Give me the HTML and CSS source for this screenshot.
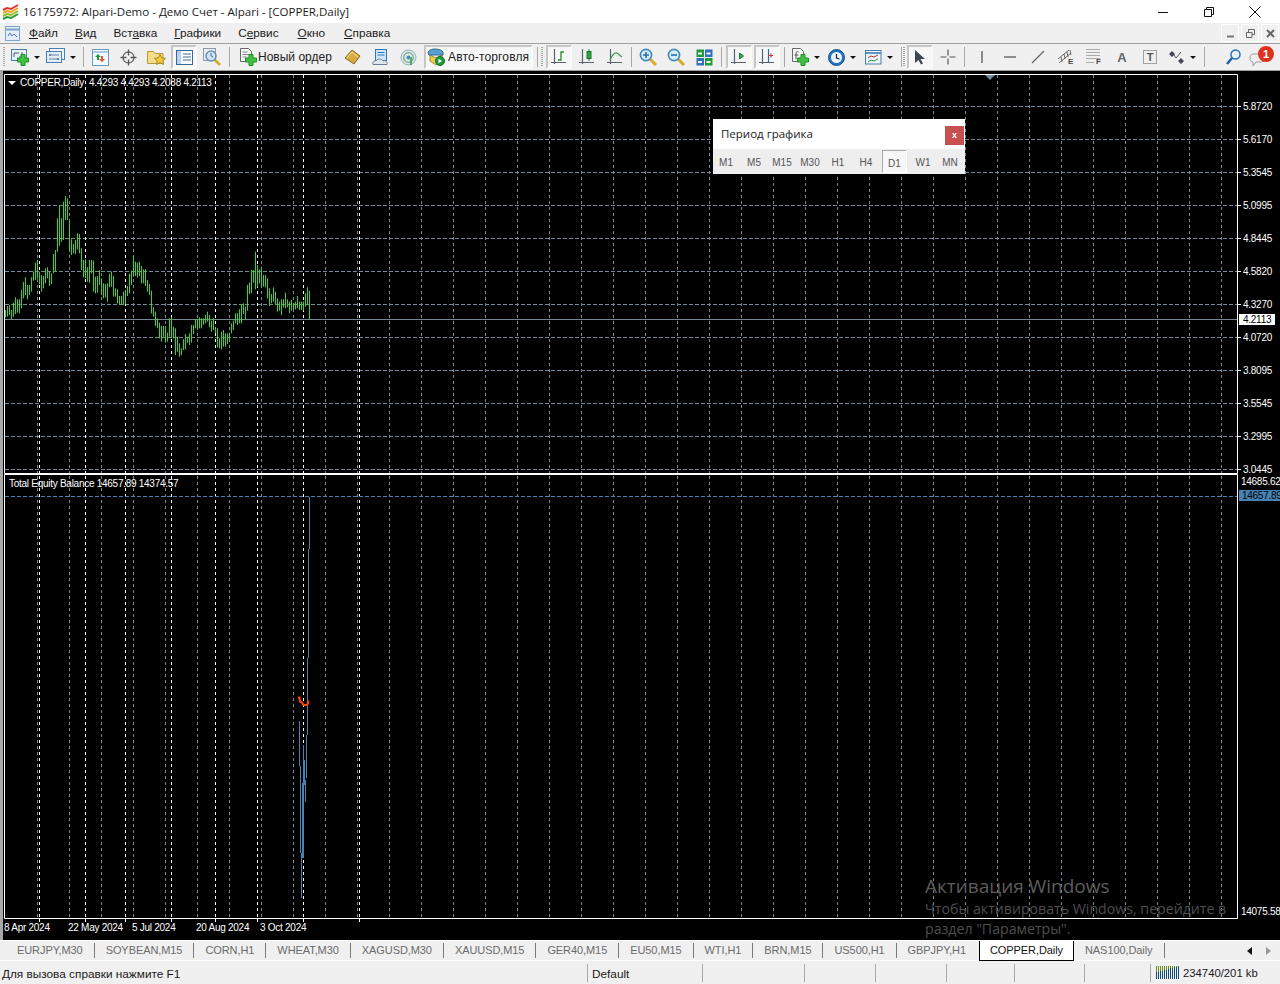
FILE: index.html
```html
<!DOCTYPE html>
<html lang="ru">
<head>
<meta charset="utf-8">
<title>16175972: Alpari-Demo - Демо Счет - Alpari - [COPPER,Daily]</title>
<link rel="stylesheet" href="styles.css">
</head>
<body>
<svg class="defs" width="0" height="0" aria-hidden="true">
  <defs>
    <symbol id="plus" viewBox="0 0 12 12"><path d="M4 .5h4v3.500h3.500v4H8v3.500H4V8H.5V4H4z" fill="#3fc23f" stroke="#1b8f2a"/></symbol>
    <symbol id="axes" viewBox="0 0 18 18"><path d="M4.500 1v15M1 14.500h15" fill="none" stroke="#5a646e" stroke-width="1.200"/></symbol>
    <symbol id="lens" viewBox="0 0 18 18"><path d="M11 11l6 6" stroke="#d9a928" stroke-width="3"/><circle cx="7" cy="7" r="5.600" fill="#d6ecfb" stroke="#3f88bf" stroke-width="1.600"/></symbol>
  </defs>
</svg>

<header class="titlebar">
  <svg class="app-icon" width="17" height="16" viewBox="0 0 17 16"><path d="M1 6l4-2 4 1 7-4" fill="none" stroke="#e0342a" stroke-width="2"/><path d="M1 9l4-2 4 1 7-4" fill="none" stroke="#f0a020" stroke-width="2"/><path d="M1 12l4-2 4 1 7-4" fill="none" stroke="#8ac020" stroke-width="2"/><path d="M1 15l4-2 4 1 7-4" fill="none" stroke="#2a9a30" stroke-width="2"/></svg>
  <span class="title-text">16175972: Alpari-Demo - Демо Счет - Alpari - [COPPER,Daily]</span>
  <div class="win-controls">
    <span class="win-btn"><svg width="12" height="12" viewBox="0 0 12 12"><path d="M1 6.500h10" stroke="#111"/></svg></span>
    <span class="win-btn"><svg width="12" height="12" viewBox="0 0 12 12"><path d="M1.500 3.500h7v7h-7zM3.500 3.500v-2h7v7h-2" fill="none" stroke="#111"/></svg></span>
    <span class="win-btn"><svg width="12" height="12" viewBox="0 0 12 12"><path d="M.5.5l11 11M11.500.5l-11 11" stroke="#111"/></svg></span>
  </div>
</header>

<nav class="menubar">
  <svg class="menu-icon" width="15" height="15" viewBox="0 0 15 15"><rect x=".5" y=".5" width="14" height="14" fill="#e3eef8" stroke="#7aa4cc"/><path d="M.5 3.500h14" stroke="#7aa4cc" stroke-width="2"/><path d="M3 10l2-3 2 3 2-2 3 3" fill="none" stroke="#5577aa"/></svg>
  <div class="menu-items">
    <span><u>Ф</u>айл</span>
    <span><u>В</u>ид</span>
    <span>Вст<u>а</u>вка</span>
    <span><u>Г</u>рафики</span>
    <span>С<u>е</u>рвис</span>
    <span><u>О</u>кно</span>
    <span><u>С</u>правка</span>
  </div>
  <div class="mdi-controls">
    <span class="mdi-btn"><svg width="9" height="9" viewBox="0 0 9 9"><path d="M1 7.500h7" stroke="#777" stroke-width="2"/></svg></span>
    <span class="mdi-btn"><svg width="9" height="9" viewBox="0 0 9 9"><path d="M.5 3.500h5.500v5H.5zM2.500 3V.5h6v5H6" fill="none" stroke="#666"/></svg></span>
    <span class="mdi-btn"><svg width="9" height="9" viewBox="0 0 9 9"><path d="M1 1l7 7M8 1L1 8" stroke="#666" stroke-width="2"/></svg></span>
  </div>
</nav>

<div class="toolbar">
  <i class="grip"></i>
  <span class="tb drop">
    <svg width="18" height="18" viewBox="0 0 18 18"><rect x=".5" y="1.500" width="15" height="11" fill="#e8f2fa" stroke="#4c7fb0"/><path d="M3 5h5M3 5v4M11 4v5M8 9h5" stroke="#556" fill="none"/><use href="#plus" x="6" y="6" width="12" height="12"/></svg><b class="caret"></b>
  </span>
  <span class="tb drop">
    <svg width="19" height="18" viewBox="0 0 19 18"><rect x="3.500" y=".5" width="15" height="11" fill="#eef5fb" stroke="#4c7fb0"/><rect x=".5" y="3.500" width="15" height="11" fill="#e0eefa" stroke="#4c7fb0"/><path d="M3 7h10M3 11h10" stroke="#6a86a8"/><path d="M4 6v2M12 10v2" stroke="#446"/></svg><b class="caret"></b>
  </span>
  <i class="sep"></i>
  <span class="tb"><svg width="17" height="17" viewBox="0 0 17 17"><rect x=".5" y=".5" width="16" height="16" fill="#f4f9fd" stroke="#6a9bc8"/><path d="M.5 3h16" stroke="#6a9bc8"/><path d="M6 5l3 3H7v3H5V8H3z" fill="#1f9a3a"/><path d="M10 13l-3-3h2V7h2v3h2z" fill="#e2532a"/></svg></span>
  <span class="tb"><svg width="17" height="17" viewBox="0 0 17 17"><circle cx="8.500" cy="8.500" r="5.500" fill="none" stroke="#666" stroke-width="1.300"/><path d="M8.500 .5v6M8.500 10.500v6M.5 8.500h6M10.500 8.500h6" stroke="#555" stroke-width="1.300"/></svg></span>
  <span class="tb"><svg width="19" height="17" viewBox="0 0 19 17"><path d="M.5 2.500h6l1.500 2h8v10H.5z" fill="#f6dd8a" stroke="#b8963a"/><path d="M13 5.500l1.700 3.300 3.800.5-2.700 2.600.7 3.600-3.500-1.700-3.500 1.700.7-3.600-2.700-2.600 3.800-.5z" fill="#f2c83a" stroke="#a8862a"/></svg></span>
  <span class="tb active"><svg width="17" height="15" viewBox="0 0 17 15"><rect x=".5" y=".5" width="16" height="14" fill="#fff" stroke="#33689c"/><rect x="1" y="1" width="4" height="13" fill="#b7d3ec"/><path d="M7 4h8M7 7h8M7 10h8" stroke="#3a6a9c"/></svg></span>
  <span class="tb"><svg width="18" height="18" viewBox="0 0 18 18"><rect x=".5" y=".5" width="12" height="12" fill="#e9eff5" stroke="#8a9bb0"/><path d="M12 12l5 5" stroke="#d9a928" stroke-width="2.500"/><circle cx="8" cy="8" r="5" fill="#cfe3f4" stroke="#6d8cab" stroke-width="1.500"/><path d="M8 5v3l2 1" stroke="#4a6a8a" fill="none"/></svg></span>
  <i class="sep sep-wide"></i>
  <span class="tb-text">
    <svg width="18" height="18" viewBox="0 0 18 18"><path d="M1.500.5h8l3 3v10h-11z" fill="#f6f6f6" stroke="#666"/><path d="M3.500 4h5M3.500 6.500h7M3.500 9h4" stroke="#888"/><use href="#plus" x="6" y="6" width="12" height="12"/></svg>
    <span>Новый ордер</span>
  </span>
  <span class="tb"><svg width="17" height="16" viewBox="0 0 17 16"><path d="M1 9l7-8 8 6-6 8z" fill="#d9aa3e" stroke="#8c6a20"/><path d="M3 9l5-6 6 5" fill="none" stroke="#f7e4a4"/></svg></span>
  <span class="tb"><svg width="17" height="17" viewBox="0 0 17 17"><rect x="3.500" y=".5" width="11" height="11" fill="#cfe4f6" stroke="#2f78bd"/><path d="M5.500 3.500h7M5.500 6h7" stroke="#2f78bd"/><path d="M1 15.500c-1-3 2-4.500 3-3.500 1-2.500 6-2.500 7 0 2-1 5 .5 4 3.500z" fill="#dfe7ee" stroke="#6b7f94"/></svg></span>
  <span class="tb"><svg width="17" height="17" viewBox="0 0 17 17"><circle cx="8.500" cy="8.500" r="7.500" fill="#dfe9e6" stroke="#8ab0bc"/><circle cx="8.500" cy="8.500" r="4.800" fill="none" stroke="#7aa88a" stroke-width="1.300"/><circle cx="8.500" cy="8.500" r="2" fill="#3b8fc0"/><path d="M11 8v8" stroke="#2e9a3c" stroke-width="1.500"/></svg></span>
  <span class="tb-auto">
    <svg width="18" height="18" viewBox="0 0 18 18"><path d="M3 7l6 3 6-3v6l-6 4-6-4z" fill="#f0cc50" stroke="#a88a28"/><path d="M1 5c0-3 4-4 7-4s7 1 8 3v3H2z" fill="#5b9fd0" stroke="#31688f"/><circle cx="13" cy="13" r="4.500" fill="#1e9a3c" stroke="#127028"/><path d="M11.500 10.800v4.400l3.500-2.200z" fill="#fff"/></svg>
    <span>Авто-торговля</span>
  </span>
  <i class="sep sep-a"></i>
  <i class="grip grip-a"></i>
  <span class="tb active"><svg width="18" height="18" viewBox="0 0 18 18"><use href="#axes" width="18" height="18"/><path d="M8 12h3V4h3" fill="none" stroke="#1f8f30" stroke-width="1.300"/></svg></span>
  <span class="tb"><svg width="18" height="18" viewBox="0 0 18 18"><use href="#axes" width="18" height="18"/><path d="M11 1v12" stroke="#1f8f30"/><rect x="9" y="3.500" width="4" height="7" fill="#2ea83c" stroke="#157025"/></svg></span>
  <span class="tb"><svg width="18" height="18" viewBox="0 0 18 18"><use href="#axes" width="18" height="18"/><path d="M4 12c2-5 5-8 7-7s3 3 5 4" fill="none" stroke="#3a9a48" stroke-width="1.200"/></svg></span>
  <i class="sep sep-b"></i>
  <span class="tb"><svg width="18" height="18" viewBox="0 0 18 18"><use href="#lens" width="18" height="18"/><path d="M4 7h6M7 4v6" stroke="#2a70a8" stroke-width="1.600"/></svg></span>
  <span class="tb"><svg width="18" height="18" viewBox="0 0 18 18"><use href="#lens" width="18" height="18"/><path d="M4 7h6" stroke="#2a70a8" stroke-width="1.600"/></svg></span>
  <span class="tb"><svg width="17" height="17" viewBox="0 0 17 17"><rect x=".5" y=".5" width="7.500" height="7.500" fill="#1f9a3c"/><rect x="9" y=".5" width="7.500" height="7.500" fill="#2f6fc0"/><rect x=".5" y="9" width="7.500" height="7.500" fill="#2f6fc0"/><rect x="9" y="9" width="7.500" height="7.500" fill="#1f9a3c"/><path d="M2 4.500h4M10.500 4.500h4M2 13h4M10.500 13h4" stroke="#fff" stroke-width="2"/></svg></span>
  <i class="sep sep-c"></i>
  <span class="tb active"><svg width="18" height="18" viewBox="0 0 18 18"><use href="#axes" width="18" height="18"/><path d="M9.500 5v6l4-3z" fill="#2fb04a" stroke="#15803a"/></svg></span>
  <span class="tb active"><svg width="18" height="18" viewBox="0 0 18 18"><use href="#axes" width="18" height="18"/><path d="M10.500 1v13" stroke="#2a6aa8" stroke-width="1.200"/><path d="M10 7.500h5M13 5.500v4" stroke="#d23a2a" stroke-width="1.200"/></svg></span>
  <i class="sep sep-d"></i>
  <span class="tb drop"><svg width="18" height="18" viewBox="0 0 18 18"><path d="M1.500.5h8l3 3v10h-11z" fill="#f6f6f6" stroke="#666"/><path d="M7.500 4c-2-1-2.500 0-2.500 2v5M3.500 7h4" fill="none" stroke="#555"/><use href="#plus" x="6" y="6" width="12" height="12"/></svg><b class="caret"></b></span>
  <span class="tb drop gap-s"><svg width="17" height="17" viewBox="0 0 17 17"><circle cx="8.500" cy="8.500" r="8" fill="#1f74c4" stroke="#15558f"/><circle cx="8.500" cy="8.500" r="5.500" fill="#eef6fc"/><path d="M8.500 5v4l3 1" fill="none" stroke="#123" stroke-width="1.200"/></svg><b class="caret"></b></span>
  <span class="tb drop gap-s"><svg width="17" height="15" viewBox="0 0 17 15"><rect x=".5" y=".5" width="15.500" height="13.500" fill="#eaf4fb" stroke="#4c7fb0"/><path d="M1 3h15" stroke="#5f94c4" stroke-width="2"/><path d="M3 8l3-2 3 1 4-2" fill="none" stroke="#b0321e"/><path d="M3 12l3-2 3 1 4-2" fill="none" stroke="#2a9a3c"/></svg><b class="caret"></b></span>
  <i class="sep sep-e"></i>
  <i class="grip grip-b"></i>
  <span class="tb active"><svg width="12" height="16" viewBox="0 0 12 16"><path d="M1 1v13l3.500-3 2.500 4.500 2-1-2.500-4.500h4.500z" fill="#3c4650"/></svg></span>
  <span class="tb"><svg width="16" height="16" viewBox="0 0 16 16"><path d="M8 .5v6M8 9.500v6M.5 8h6M9.500 8h6" stroke="#555" stroke-width="1.200"/></svg></span>
  <i class="sep sep-f"></i>
  <span class="tb"><svg width="4" height="14" viewBox="0 0 4 14"><path d="M2 1v12" stroke="#555" stroke-width="1.300"/></svg></span>
  <span class="tb"><svg width="14" height="4" viewBox="0 0 14 4"><path d="M1 2h12" stroke="#555" stroke-width="1.300"/></svg></span>
  <span class="tb"><svg width="14" height="14" viewBox="0 0 14 14"><path d="M1 13L13 1" stroke="#666" stroke-width="1.200"/></svg></span>
  <span class="tb"><svg width="18" height="18" viewBox="0 0 18 18"><path d="M1 11L12 2M2 15L14 5M5 14l-1-5M8 11L7 6M11 9l-1-5M14 7l-1-5" stroke="#666" fill="none"/><text class="tool-letter" x="11" y="16">E</text></svg></span>
  <span class="tb"><svg width="16" height="18" viewBox="0 0 16 18"><path d="M.5 1.500h13M.5 4.500h13M.5 7.500h13M.5 10.500h13M.5 14.500h8" stroke="#666" stroke-dasharray="1 1"/><text class="tool-letter" x="10" y="16">F</text></svg></span>
  <span class="tb tb-a">A</span>
  <span class="tb"><svg width="14" height="14" viewBox="0 0 14 14"><rect x=".5" y=".5" width="13" height="13" fill="none" stroke="#555" stroke-dasharray="1 1"/><text class="tool-t" x="7" y="11">T</text></svg></span>
  <span class="tb drop gap-s"><svg width="16" height="15" viewBox="0 0 16 15"><path d="M3 1l3 3-3 3-3-3zM12 8l3 3-3 3-3-3z" fill="#445"/><path d="M7 4l2 3 5-6" fill="none" stroke="#556" transform="translate(-2 1)"/></svg><b class="caret"></b></span>
  <i class="sep sep-g"></i>
  <span class="tb"><svg width="15" height="16" viewBox="0 0 15 16"><circle cx="9.500" cy="5.500" r="4.500" fill="#eaf4fc" stroke="#2a6fc0" stroke-width="1.500"/><path d="M6 9l-5 6" stroke="#1f5fb0" stroke-width="2.500"/></svg></span>
  <span class="tb-alert">
    <svg width="17" height="14" viewBox="0 0 17 14"><path d="M4 1h8c3 0 4 2 4 4s-1 4-4 4H7l-3 4V9C2 9 1 7 1 5s1-4 3-4z" fill="#f0f0f0" stroke="#9a9a9a"/></svg>
    <span class="badge">1</span>
  </span>
</div>

<main class="chart">
  <svg class="plot" width="1277" height="869" viewBox="3 71 1277 869">
    <g class="grid">
      <path class="grid-slate-v" d="M37.500 75V473M69.500 75V473M101.500 75V473M133.500 75V473M165.500 75V473M197.500 75V473M229.500 75V473M261.500 75V473M293.500 75V473M325.500 75V473M357.500 75V473M389.500 75V473M421.500 75V473M453.500 75V473M485.500 75V473M517.500 75V473M549.500 75V473M581.500 75V473M613.500 75V473M645.500 75V473M677.500 75V473M709.500 75V473M741.500 75V473M773.500 75V473M805.500 75V473M837.500 75V473M869.500 75V473M901.500 75V473M933.500 75V473M965.500 75V473M997.500 75V473M1029.500 75V473M1061.500 75V473M1093.500 75V473M1125.500 75V473M1157.500 75V473M1189.500 75V473M1221.500 75V473"/>
      <path class="grid-slate-v" d="M37.500 476V918M69.500 476V918M101.500 476V918M133.500 476V918M165.500 476V918M197.500 476V918M229.500 476V918M261.500 476V918M293.500 476V918M325.500 476V918M357.500 476V918M389.500 476V918M421.500 476V918M453.500 476V918M485.500 476V918M517.500 476V918M549.500 476V918M581.500 476V918M613.500 476V918M645.500 476V918M677.500 476V918M709.500 476V918M741.500 476V918M773.500 476V918M805.500 476V918M837.500 476V918M869.500 476V918M901.500 476V918M933.500 476V918M965.500 476V918M997.500 476V918M1029.500 476V918M1061.500 476V918M1093.500 476V918M1125.500 476V918M1157.500 476V918M1189.500 476V918M1221.500 476V918"/>
      <path class="grid-slate-h" d="M5 106.500H1237M5 139.500H1237M5 172.500H1237M5 205.500H1237M5 238.500H1237M5 271.500H1237M5 304.500H1237M5 337.500H1237M5 370.500H1237M5 403.500H1237M5 436.500H1237M5 469.500H1237"/>
      <path class="grid-white" d="M39.500 75V473M85.500 75V473M125.500 75V473M171.500 75V473M215.500 75V473M257.500 75V473M303.500 75V473M359.500 75V473M39.500 476V918M85.500 476V918M125.500 476V918M171.500 476V918M215.500 476V918M257.500 476V918M303.500 476V918M359.500 476V918"/>
      <path class="grid-blue" d="M5 496.500H1237"/>
      <path class="last-price" d="M5 319.500H1238"/>
    </g>
    <g transform="translate(.5 190) scale(.33333)">
      <path class="bars" d="M15 360V382M21 348V380M27 345V375M33 360V388M39 338V380M45 322V372M51 328V368M57 328V370M63 300V355M69 276V325M75 262V315M81 285V328M87 285V315M93 262V305M99 245V272M105 218V270M111 210V265M117 245V282M123 255V305M129 258V295M135 235V280M141 232V265M147 245V288M153 250V282M159 192V250M165 180V245M171 85V185M177 45V168M183 85V155M189 35V150M195 18V90M201 25V90M207 90V182M213 148V195M219 162V190M225 150V192M231 130V178M237 132V190M243 175V240M249 210V262M255 208V265M261 232V275M267 210V278M273 210V250M279 212V305M285 260V310M291 258V308M297 240V285M303 265V315M309 280V325M315 282V322M321 280V335M327 252V292M333 245V290M339 258V320M345 295V320M351 298V340M357 318V342M363 318V345M369 305V345M375 300V342M381 288V318M387 252V310M393 242V285M399 195V260M405 215V258M411 218V262M417 215V258M423 228V280M429 238V280M435 238V288M441 270V305M447 282V315M453 302V370M459 352V380M465 365V408M471 385V415M477 398V445M483 408V455M489 408V440M495 408V458M501 428V455M507 385V440M513 382V445M519 410V445M525 415V495M531 440V485M537 460V500M543 475V495M549 448V480M555 432V478M561 440V458M567 430V465M573 405V458M579 405V432M585 388V415M591 388V418M597 382V415M603 385V415M609 385V405M615 375V400M621 365V395M627 375V412M633 392V425M639 385V420M645 410V430M651 415V472M657 445V475M663 425V478M669 420V470M675 430V470M681 430V462M687 428V455M693 400V430M699 392V420M705 370V400M711 370V405M717 358V400M723 342V400M729 340V372M735 350V388M741 285V362M747 278V312M753 240V310M759 240V278M765 185V298M771 225V292M777 238V280M783 230V290M789 255V290M795 255V292M801 265V325M807 295V348M813 312V340M819 292V335M825 305V345M831 325V365M837 335V362M843 328V375M849 328V352M855 308V355M861 328V352M867 335V370M873 330V362M879 340V358M885 335V358M891 318V355M897 335V360M903 335V360M909 335V362M915 310V350M921 292V345M927 302V388"/>
    </g>
    <path class="balance" d="M309.500 497V549M308.500 549V658M307.500 658V735M306.500 735V778M305.500 780V802M304.500 760V785M303.500 745V858M302.500 783V858M301.500 853V898M300.500 766V853M299.500 721V766"/>
    <path class="equity" d="M298 697.500h1.500l.5 4 2 1 1.500 2.500h3l1.500-1.500.5-3"/>
    <path class="frame" d="M4.500 74.500H1237.500V473.500H4.500ZM4.500 474.500H1237.500V918.500H4.500Z"/>
    <path class="ticks" d="M1238 106.500h3M1238 139.500h3M1238 172.500h3M1238 205.500h3M1238 238.500h3M1238 271.500h3M1238 304.500h3M1238 337.500h3M1238 370.500h3M1238 403.500h3M1238 436.500h3M1238 469.500h3M39.500 919v3M85.500 919v3M125.500 919v3M171.500 919v3M215.500 919v3M257.500 919v3M303.500 919v3M359.500 919v3"/>
    <path class="marker" d="M985 75h10l-5 5z"/>
    <path class="legend-arrow" d="M8 81h8l-4 4z"/>
    <text class="lbl" x="20" y="86">COPPER,Daily  4.4293 4.4293 4.2088 4.2113</text>
    <text class="lbl" x="9" y="487">Total Equity Balance 14657.89 14374.57</text>
    <text class="lbl" x="1243" y="110">5.8720</text>
    <text class="lbl" x="1243" y="143">5.6170</text>
    <text class="lbl" x="1243" y="176">5.3545</text>
    <text class="lbl" x="1243" y="209">5.0995</text>
    <text class="lbl" x="1243" y="242">4.8445</text>
    <text class="lbl" x="1243" y="275">4.5820</text>
    <text class="lbl" x="1243" y="308">4.3270</text>
    <text class="lbl" x="1243" y="341">4.0720</text>
    <text class="lbl" x="1243" y="374">3.8095</text>
    <text class="lbl" x="1243" y="407">3.5545</text>
    <text class="lbl" x="1243" y="440">3.2995</text>
    <text class="lbl" x="1243" y="473">3.0445</text>
    <rect class="price-box" x="1239" y="314" width="36" height="11"/>
    <text class="lbl lbl-dark" x="1243" y="323">4.2113</text>
    <text class="lbl" x="1241" y="485">14685.62</text>
    <rect class="balance-box" x="1239" y="490" width="41" height="11"/>
    <text class="lbl lbl-dark" x="1242" y="499">14657.89</text>
    <text class="lbl" x="1241" y="915">14075.58</text>
    <text class="lbl" x="4" y="931">8 Apr 2024</text>
    <text class="lbl" x="68" y="931">22 May 2024</text>
    <text class="lbl" x="132" y="931">5 Jul 2024</text>
    <text class="lbl" x="196" y="931">20 Aug 2024</text>
    <text class="lbl" x="260" y="931">3 Oct 2024</text>
  </svg>

  <section class="period-dialog">
    <div class="period-head">
      <span>Период графика</span>
      <span class="period-close">x</span>
    </div>
    <div class="period-row">
      <span>M1</span><span>M5</span><span>M15</span><span>M30</span><span>H1</span><span>H4</span><span class="on">D1</span><span>W1</span><span class="last">MN</span>
    </div>
  </section>

  <aside class="watermark">
    <div class="wm-title">Активация Windows</div>
    <div class="wm-text">Чтобы активировать Windows, перейдите в<br>раздел "Параметры".</div>
  </aside>
</main>

<div class="tabs">
  <span class="tab">EURJPY,M30</span>
  <span class="tab">SOYBEAN,M15</span>
  <span class="tab">CORN,H1</span>
  <span class="tab">WHEAT,M30</span>
  <span class="tab">XAGUSD,M30</span>
  <span class="tab">XAUUSD,M15</span>
  <span class="tab">GER40,M15</span>
  <span class="tab">EU50,M15</span>
  <span class="tab">WTI,H1</span>
  <span class="tab">BRN,M15</span>
  <span class="tab">US500,H1</span>
  <span class="tab tab-prev">GBPJPY,H1</span>
  <span class="tab tab-on">COPPER,Daily</span>
  <span class="tab">NAS100,Daily</span>
  <span class="tab-arrows">
    <svg width="5" height="8" viewBox="0 0 5 8"><path d="M5 0v8L0 4z" fill="#111"/></svg>
    <svg width="5" height="8" viewBox="0 0 5 8"><path d="M0 0v8l5-4z" fill="#999"/></svg>
  </span>
</div>

<footer class="status">
  <span class="cell cell-first">Для вызова справки нажмите F1</span>
  <span class="cell">Default</span>
  <span class="cell"></span>
  <span class="cell"></span>
  <span class="cell"></span>
  <span class="cell"></span>
  <span class="cell"></span>
  <span class="cell"></span>
  <span class="cell cell-mem">
    <svg width="23" height="13" viewBox="0 0 23 13"><path d="M.5 6v7M2.500 6v7M4.500 5v8M6.500 5v8M8.500 4v9M10.500 4v9M12.500 3v10M14.500 2v11M16.500 2v11M18.500 1v12M20.500 1v12M22.500 0v13" stroke="#104a70"/><path d="M.5 0v6M2.500 0v6M4.500 0v5M6.500 0v5M8.500 0v4M10.500 0v4M12.500 0v3M14.500 0v2M16.500 0v2M18.500 0v1M20.500 0v1" stroke="#6d8c1f"/></svg>
    234740/201 kb
  </span>
</footer>
</body>
</html>
```

FILE: styles.css
```css
* { box-sizing: border-box; }
html, body { margin: 0; padding: 0; }
body {
  width: 1280px;
  height: 984px;
  overflow: hidden;
  background: #f0f0f0;
  font-family: "Liberation Sans", Arial, sans-serif;
  color: #111;
}
svg { display: block; flex: none; }
.defs { position: absolute; }

/* title bar */
.titlebar {
  height: 23px;
  background: #fff;
  display: flex;
  align-items: center;
  padding: 0 2px;
}
.app-icon { margin-right: 4px; }
.title-text {
  font-family: "Open Sans", "Noto Sans", sans-serif;
  font-size: 11.540px;
  color: #1a1a1a;
  white-space: nowrap;
}
.win-controls { margin-left: auto; display: flex; }
.win-btn { width: 46px; height: 23px; display: flex; align-items: center; justify-content: center; }

/* menu */
.menubar {
  height: 20px;
  background: #f0f0f0;
  display: flex;
  align-items: center;
  padding-left: 5px;
}
.menu-items {
  display: flex;
  gap: 17px;
  margin-left: 9px;
  font-size: 11.800px;
  color: #1a1a1a;
}
.menu-items span:nth-child(n+6) { margin-left: 2px; }
.menu-items u { text-decoration-thickness: 1px; }
.mdi-controls { margin-left: auto; margin-right: 1px; display: flex; gap: 2px; }
.mdi-btn {
  width: 18px;
  height: 18px;
  border: 1px solid #fff;
  display: flex;
  align-items: center;
  justify-content: center;
}

/* toolbar */
.toolbar {
  height: 28px;
  border-top: 1px solid #a0a0a0;
  border-bottom: 1px solid #a0a0a0;
  background: #f0f0f0;
  display: flex;
  align-items: center;
  padding-left: 3px;
}
.grip {
  width: 2px;
  height: 20px;
  margin-right: 3px;
  background: repeating-linear-gradient(#a8a8a8 0 1px, transparent 1px 2px);
}
.tb {
  width: 28px;
  height: 24px;
  flex: none;
  display: flex;
  align-items: center;
  justify-content: center;
}
.tb.drop { width: 35px; justify-content: flex-start; padding-left: 3px; }
.gap-s { margin-left: 2px; }
.caret {
  margin-left: 5px;
  width: 0;
  height: 0;
  border-left: 3px solid transparent;
  border-right: 3px solid transparent;
  border-top: 3px solid #111;
}
.tb.active {
  border: 2px solid;
  border-color: #c6c6c6 #fafafa #fafafa #c6c6c6;
  background: #f7f7f7;
  width: 26px;
  margin: 0 1px;
}
.sep {
  width: 1px;
  height: 20px;
  margin: 0 2px 0 5px;
  background: #a8a8a8;
}
.sep-wide { margin: 0 4px 0 3px; }
.sep-a { margin: 0 3px 0 4px; }
.grip-a { margin-right: 2px; }
.grip-b { margin-right: 1px; }
.sep-b { margin: 0 2px 0 2px; }
.sep-c { margin: 0 3px 0 3px; }
.sep-d { margin: 0 3px 0 3px; }
.sep-e { margin: 0 1px 0 4px; }
.sep-f { margin: 0 3px 0 2px; }
.sep-g { margin: 0 14px 0 3px; }
.tb-text {
  width: 104px;
  display: flex;
  align-items: center;
  gap: 1px;
  font-size: 12px;
  color: #222;
  padding-left: 5px;
}
.tb-auto {
  width: 109px;
  height: 24px;
  margin-left: 2px;
  border: 2px solid;
  border-color: #c6c6c6 #fafafa #fafafa #c6c6c6;
  background: #f7f7f7;
  display: flex;
  align-items: center;
  gap: 3px;
  padding-left: 1px;
  font-size: 12px;
  letter-spacing: .15px;
  color: #222;
}
.tb-a { font-size: 13px; font-weight: bold; color: #666; }
.tool-letter { font: bold 8px "Liberation Sans", sans-serif; fill: #444; }
.tool-t { font: bold 11px "Liberation Sans", sans-serif; fill: #555; text-anchor: middle; }
.tb-alert {
  position: relative;
  width: 30px;
  height: 24px;
  margin-left: 1px;
  display: flex;
  align-items: flex-end;
  padding-left: 1px;
  padding-bottom: 2px;
}
.badge {
  position: absolute;
  left: 10px;
  top: 1px;
  width: 16px;
  height: 16px;
  border-radius: 50%;
  background: #e0301e;
  color: #fff;
  font-size: 11px;
  font-weight: bold;
  line-height: 16px;
  text-align: center;
}

/* chart */
.chart {
  position: relative;
  height: 869px;
  background: #000;
  border-left: 3px solid #a8a8a8;
}
.plot { background: #000; }
.grid path { fill: none; stroke-width: 1; }
.grid-slate-v { stroke: #778899; stroke-dasharray: 3 3; }
.grid-slate-h { stroke: #778899; stroke-dasharray: 4 2; }
.grid-white { stroke: #fff; stroke-dasharray: 3 3; }
.grid-blue { stroke: #4682b4; stroke-dasharray: 4 2; }
.last-price { stroke: #778899; }
.bars { fill: none; stroke: #2fe01c; stroke-width: 3; }
.balance { fill: none; stroke: #4682b4; stroke-width: 1; }
.equity { fill: none; stroke: #ff4500; stroke-width: 2; }
.frame { fill: none; stroke: #fff; stroke-width: 1; }
.ticks { fill: none; stroke: #fff; }
.marker { fill: #778899; }
.legend-arrow { fill: #fff; }
.lbl {
  font-family: "Liberation Sans", Arial, sans-serif;
  font-size: 10px;
  letter-spacing: -.27px;
  fill: #fff;
  white-space: pre;
}
.lbl-dark { fill: #000; }
.price-box { fill: #fff; }
.balance-box { fill: #4682b4; }

/* period dialog */
.period-dialog {
  position: absolute;
  left: 710px;
  top: 48px;
  width: 252px;
  height: 55px;
  background: #fff;
}
.period-head {
  height: 30px;
  padding: 7px 1px 0 8px;
  display: flex;
  justify-content: space-between;
  align-items: flex-start;
  font-family: "Open Sans", "Noto Sans", sans-serif;
  font-size: 11.500px;
  color: #1a1a1a;
}
.period-close {
  width: 19px;
  height: 19px;
  background: #c75050;
  color: #fff;
  font: bold 9px/19px "Liberation Sans", sans-serif;
  text-align: center;
}
.period-row {
  height: 25px;
  background: #eee;
  display: flex;
  font-size: 10px;
  color: #555;
}
.period-row span {
  width: 28px;
  flex: none;
  text-align: center;
  line-height: 28px;
}
.period-row span:first-child { margin-left: -1px; }
.period-row .last { margin-left: -1px; }
.period-row .on {
  width: 25px;
  margin: 1px 2px 1px 2px;
  line-height: 25px;
  border: 1px solid;
  border-color: #ababab #fff #fff #ababab;
  background: #f7f7f7;
}

/* watermark */
.watermark {
  position: absolute;
  left: 922px;
  top: 802px;
  color: #5c5c5c;
  font-family: "Open Sans", "Noto Sans", sans-serif;
  white-space: nowrap;
}
.wm-title { font-size: 19px; line-height: 26px; }
.wm-text { font-size: 14.170px; line-height: 20px; color: #4e4e4e; }

/* tabs */
.tabs {
  height: 21px;
  background: #f0f0f0;
  border-top: 1px solid #fff;
  border-bottom: 1px solid #fff;
  display: flex;
  align-items: center;
  padding-left: 6px;
  font-size: 11px;
  letter-spacing: -.08px;
  color: #6a6a6a;
}
.tab {
  padding: 0 11px;
  line-height: 15px;
  border-right: 1px solid #7a7a7a;
  white-space: nowrap;
}
.tab-prev { border-right: 0; padding-right: 13px; }
.tab-on {
  height: 20px;
  line-height: 19px;
  padding: 0 10px;
  background: #fff;
  color: #111;
  border: 1px solid #000;
  border-top: 0;
}
.tab-arrows {
  margin-left: auto;
  margin-right: 9px;
  display: flex;
  gap: 14px;
}

/* status */
.status {
  height: 23px;
  display: grid;
  grid-template-columns: 587px 115px 102px 71px 71px 68px 70px 66px 1fr;
  align-items: center;
  font-size: 11.800px;
  color: #1a1a1a;
  background: #f0f0f0;
}
.cell {
  height: 18px;
  border-left: 1px solid #a8a8a8;
  padding-left: 4px;
  line-height: 20px;
  white-space: nowrap;
}
.cell-first { border-left: 0; padding-left: 2px; }
.cell-mem { display: flex; align-items: center; gap: 4px; padding-left: 5px; font-size: 11.300px; }
```
